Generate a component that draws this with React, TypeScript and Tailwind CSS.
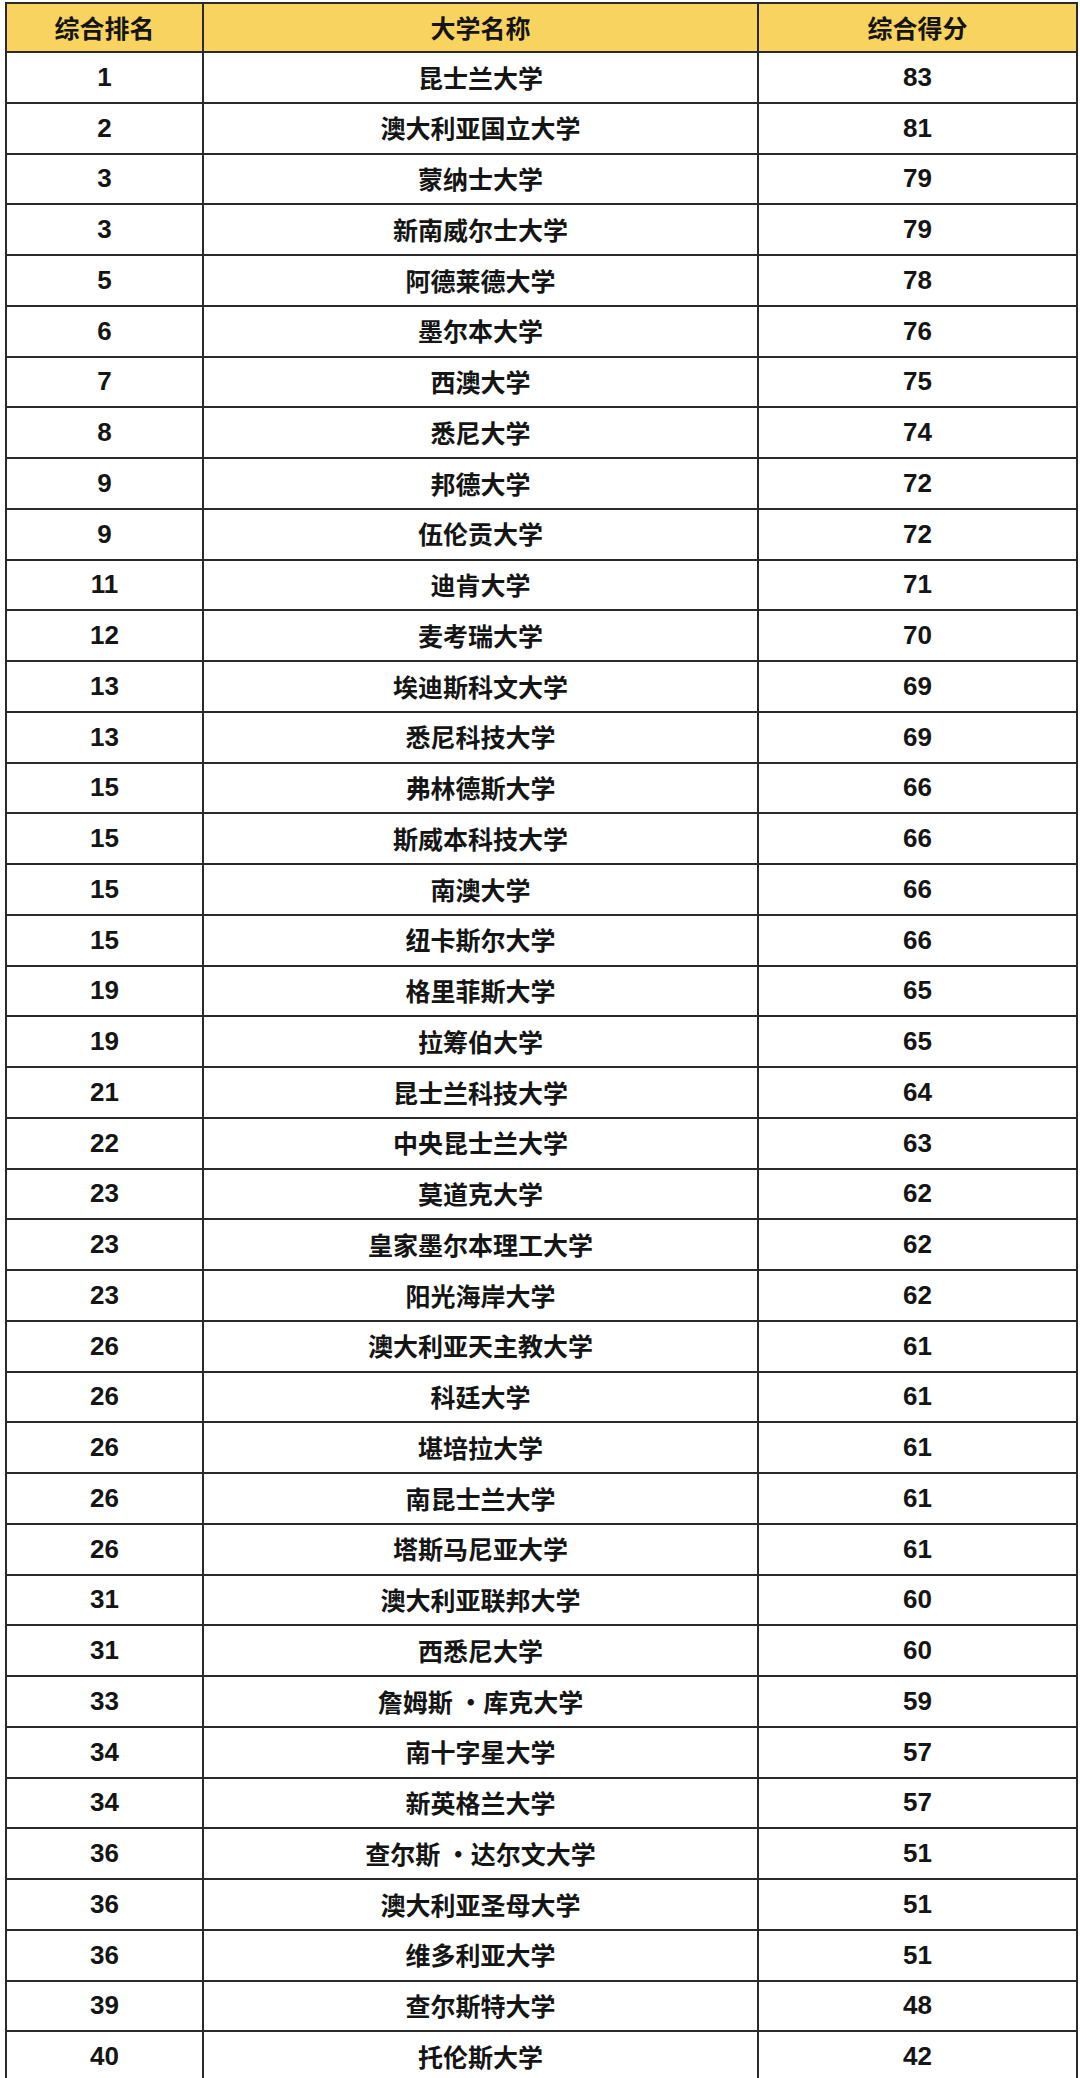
import React from "react";

const rows: [string, string, string][] = [
  ["1", "昆士兰大学", "83"],
  ["2", "澳大利亚国立大学", "81"],
  ["3", "蒙纳士大学", "79"],
  ["3", "新南威尔士大学", "79"],
  ["5", "阿德莱德大学", "78"],
  ["6", "墨尔本大学", "76"],
  ["7", "西澳大学", "75"],
  ["8", "悉尼大学", "74"],
  ["9", "邦德大学", "72"],
  ["9", "伍伦贡大学", "72"],
  ["11", "迪肯大学", "71"],
  ["12", "麦考瑞大学", "70"],
  ["13", "埃迪斯科文大学", "69"],
  ["13", "悉尼科技大学", "69"],
  ["15", "弗林德斯大学", "66"],
  ["15", "斯威本科技大学", "66"],
  ["15", "南澳大学", "66"],
  ["15", "纽卡斯尔大学", "66"],
  ["19", "格里菲斯大学", "65"],
  ["19", "拉筹伯大学", "65"],
  ["21", "昆士兰科技大学", "64"],
  ["22", "中央昆士兰大学", "63"],
  ["23", "莫道克大学", "62"],
  ["23", "皇家墨尔本理工大学", "62"],
  ["23", "阳光海岸大学", "62"],
  ["26", "澳大利亚天主教大学", "61"],
  ["26", "科廷大学", "61"],
  ["26", "堪培拉大学", "61"],
  ["26", "南昆士兰大学", "61"],
  ["26", "塔斯马尼亚大学", "61"],
  ["31", "澳大利亚联邦大学", "60"],
  ["31", "西悉尼大学", "60"],
  ["33", "詹姆斯 ·库克大学", "59"],
  ["34", "南十字星大学", "57"],
  ["34", "新英格兰大学", "57"],
  ["36", "查尔斯 ·达尔文大学", "51"],
  ["36", "澳大利亚圣母大学", "51"],
  ["36", "维多利亚大学", "51"],
  ["39", "查尔斯特大学", "48"],
  ["40", "托伦斯大学", "42"],
];

const cjk = "font-['Noto_Sans_CJK_SC',sans-serif] font-bold text-[25px] text-[#151515]";
const num = "font-['Liberation_Sans',Arial,sans-serif] font-bold text-[26px] text-[#151515]";

export default function App() {
  return (
    <div className="w-[1080px] bg-white pt-[2px] pl-[5px]">
      <div className="w-[1073px] border-t-2 border-l-2 border-r-2 border-[#2a2a2a]">
        <div className="grid grid-cols-[197px_555px_1fr] h-[49px] bg-[#f8d35f] border-b-2 border-[#2a2a2a]">
          <div className={`flex items-center justify-center border-r-2 border-[#2a2a2a] ${cjk}`}>综合排名</div>
          <div className={`flex items-center justify-center border-r-2 border-[#2a2a2a] ${cjk}`}>大学名称</div>
          <div className={`flex items-center justify-center ${cjk}`}>综合得分</div>
        </div>
        {rows.map((r, i) => (
          <div
            key={i}
            className="grid grid-cols-[197px_555px_1fr] h-[50.75px] border-b-2 border-[#2a2a2a]"
          >
            <div className={`flex items-center justify-center border-r-2 border-[#2a2a2a] ${num}`}>{r[0]}</div>
            <div className={`flex items-center justify-center border-r-2 border-[#2a2a2a] ${cjk} whitespace-pre`}>{r[1]}</div>
            <div className={`flex items-center justify-center ${num}`}>{r[2]}</div>
          </div>
        ))}
      </div>
    </div>
  );
}
